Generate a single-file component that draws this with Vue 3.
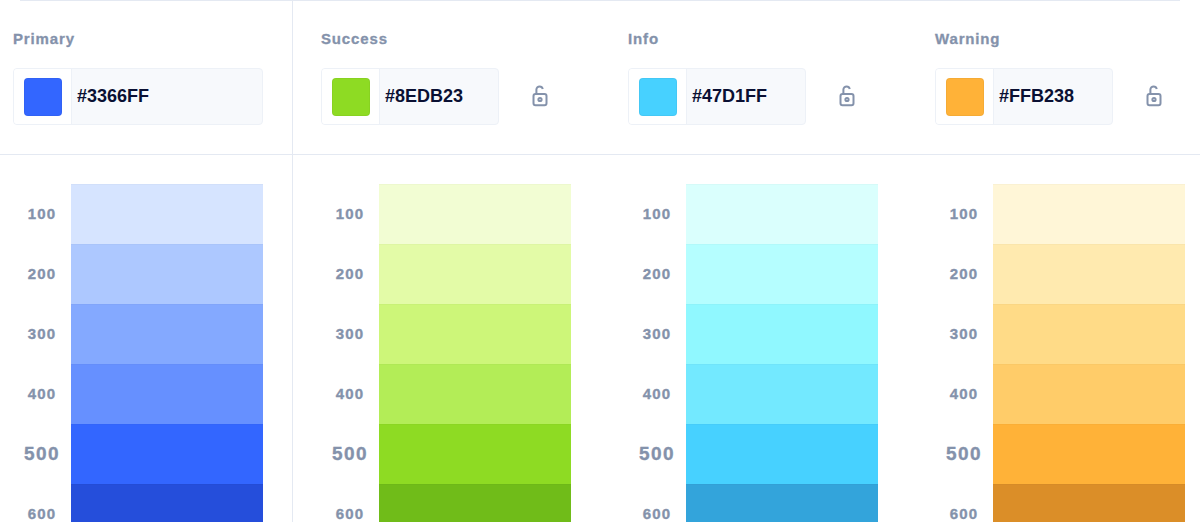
<script setup>
const palettes = [
  {
    name: 'Primary',
    hex: '#3366FF',
    locked: true,
    shades: ['#D6E4FF', '#ADC8FF', '#84A9FF', '#6690FF', '#3366FF', '#254EDB'],
  },
  {
    name: 'Success',
    hex: '#8EDB23',
    shades: ['#F2FDD3', '#E3FBA7', '#CDF679', '#B3ED57', '#8EDB23', '#70BC19'],
  },
  {
    name: 'Info',
    hex: '#47D1FF',
    shades: ['#DAFFFD', '#B5FEFF', '#90F8FF', '#73E9FF', '#47D1FF', '#33A4DB'],
  },
  {
    name: 'Warning',
    hex: '#FFB238',
    shades: ['#FFF6D7', '#FFEAAF', '#FFDB87', '#FFCC69', '#FFB238', '#DB8E28'],
  },
]

const weights = [100, 200, 300, 400, 500, 600]
</script>

<template>
  <div class="page">
    <div class="top-edge" />
    <div class="columns">
      <section
        v-for="p in palettes"
        :key="p.name"
        class="col"
        :class="{ 'is-main': p.locked }"
      >
        <header class="head">
          <div class="label">{{ p.name }}</div>
          <div class="picker-row">
            <div class="picker">
              <div class="well">
                <span class="chip" :style="{ background: p.hex }" />
              </div>
              <div class="hex">{{ p.hex }}</div>
            </div>
            <svg
              v-if="!p.locked"
              class="lock"
              width="24"
              height="24"
              viewBox="0 0 24 24"
              fill="none"
              stroke="#8492ab"
              stroke-width="2"
            >
              <rect x="5.5" y="8.9" width="13" height="11.4" rx="2" />
              <circle cx="12" cy="14.5" r="1.6" />
              <path d="M8.4 8.9V4.6C8.4 2.5 10 1.4 11.6 1.4c1.6 0 2.8.9 3.2 2.6" />
            </svg>
          </div>
        </header>
        <div class="scale">
          <div v-for="(w, i) in weights" :key="w" class="step">
            <span class="weight" :class="{ 'is-base': w === 500 }">{{ w }}</span>
            <span class="tone" :style="{ background: p.shades[i] }" />
          </div>
        </div>
      </section>
    </div>
  </div>
</template>

<style>
html,
body {
  margin: 0;
  background: #fff;
}
</style>

<style scoped>
.page {
  width: 1200px;
  height: 522px;
  overflow: hidden;
  font-family: "Liberation Sans", Arial, sans-serif;
}

.top-edge {
  height: 1px;
  margin: 0 20px;
  background: #e4e9f2;
}

.columns {
  display: flex;
  height: 521px;
}

.col {
  flex: none;
  width: 307px;
  box-sizing: border-box;
}
.col.is-main {
  width: 293px;
  border-right: 1px solid #e4e9f2;
  margin-top: -1px;
  padding-top: 1px;
}

.head {
  height: 154px;
  padding: 30px 0 0 28px;
  box-sizing: border-box;
  border-bottom: 1px solid #e4e9f2;
}
.is-main .head {
  padding-left: 13px;
}

.label {
  font-size: 15px;
  line-height: 16px;
  font-weight: 700;
  letter-spacing: 0.85px;
  color: #8492ab;
  -webkit-text-stroke: 0.3px #8492ab;
}

.picker-row {
  display: flex;
  align-items: center;
  margin-top: 21px;
}

.picker {
  display: flex;
  width: 178px;
  height: 57px;
  box-sizing: border-box;
  border: 1px solid #edf1f7;
  border-radius: 4px;
  background: #f7f9fc;
  overflow: hidden;
}
.is-main .picker {
  width: 250px;
}

.well {
  width: 58px;
  flex: none;
  box-sizing: border-box;
  padding: 9px 0 0 10px;
  background: #fff;
  border-right: 1px solid #edf1f7;
}

.chip {
  display: block;
  width: 38px;
  height: 38px;
  box-sizing: border-box;
  border: 1px solid rgba(0, 0, 0, 0.04);
  border-radius: 4px;
}

.hex {
  padding-left: 5px;
  line-height: 54px;
  font-size: 18px;
  font-weight: 700;
  color: #0a1033;
}

.lock {
  margin-left: 29px;
}

.scale {
  padding: 29px 0 0 28px;
}
.is-main .scale {
  padding-left: 13px;
}

.step {
  display: flex;
  align-items: center;
  height: 60px;
}

.weight {
  width: 58px;
  flex: none;
  padding-bottom: 2px;
  text-align: center;
  font-size: 15px;
  font-weight: 700;
  letter-spacing: 1.2px;
  color: #8492ab;
  -webkit-text-stroke: 0.35px #8492ab;
}
.weight.is-base {
  padding-bottom: 0;
  font-size: 19px;
  letter-spacing: 1.5px;
}

.tone {
  display: block;
  width: 192px;
  height: 100%;
  box-sizing: border-box;
  border-top: 1px solid rgba(0, 0, 0, 0.02);
}
</style>
